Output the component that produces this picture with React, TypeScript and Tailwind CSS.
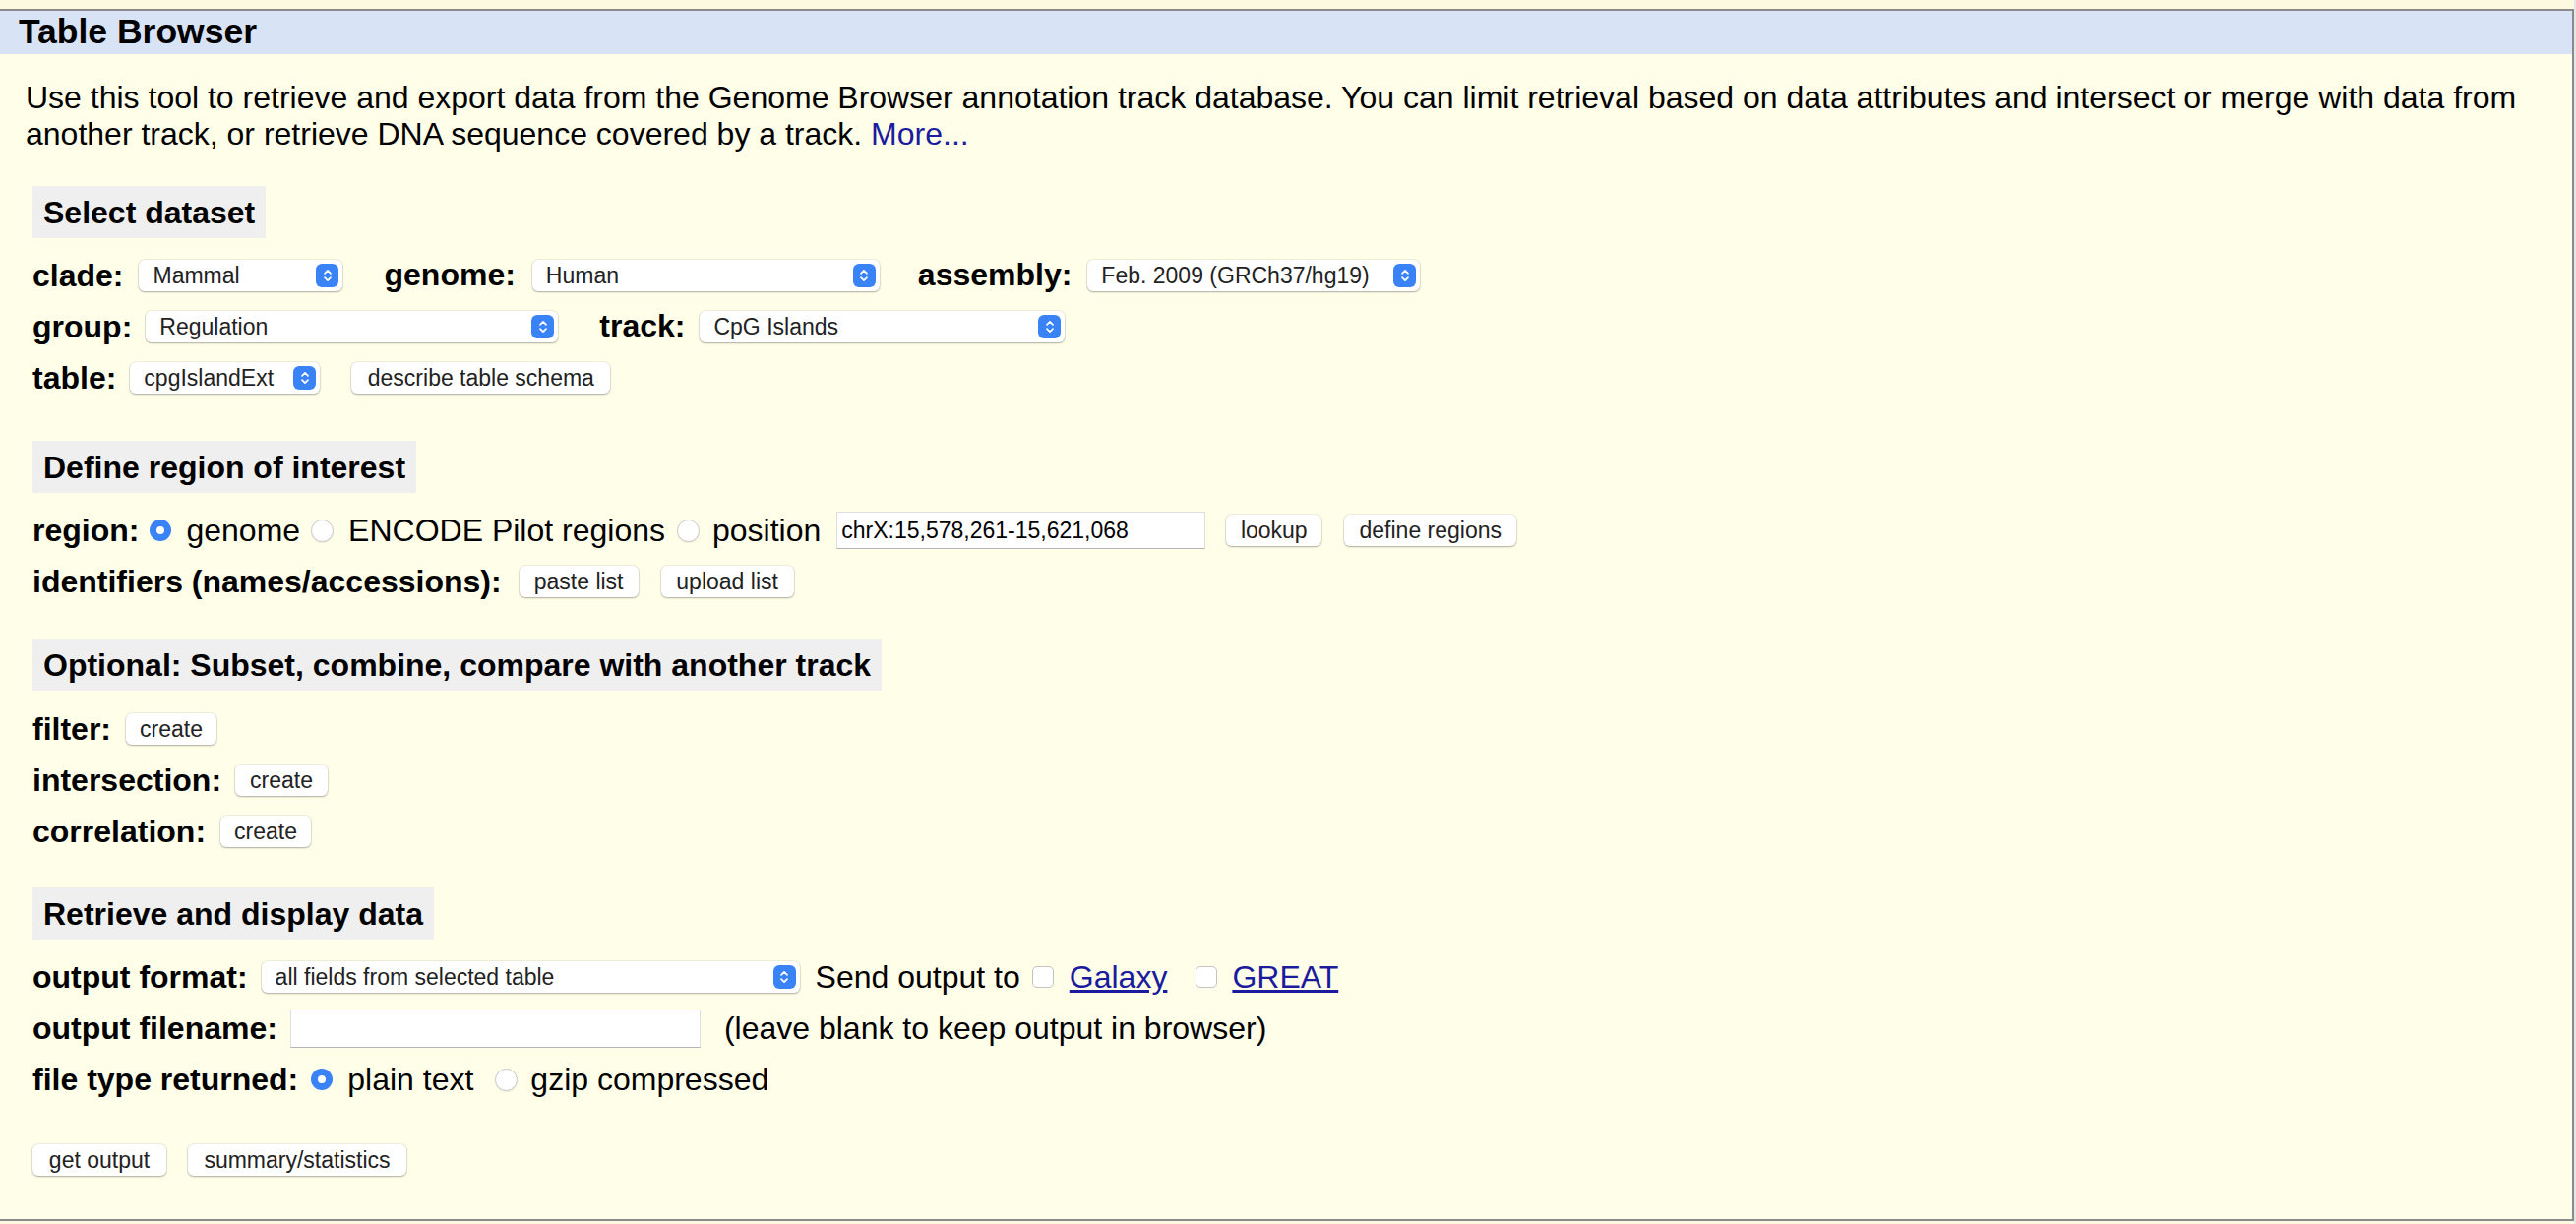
import React from "react";

const ctl =
  "flex h-[32px] shrink-0 items-center rounded-[6px] bg-white text-[23px] text-[#222] shadow-[0_1px_2px_rgba(0,0,0,0.28),0_0_0_1px_rgba(0,0,0,0.06)]";

function Stepper() {
  return (
    <span className="ml-auto mr-[4px] flex h-[24px] w-[23px] items-center justify-center rounded-[6px] bg-[#3a83f7]">
      <svg width="10" height="18" viewBox="0 0 10 18" fill="none" stroke="white" strokeWidth="1.7" strokeLinecap="round" strokeLinejoin="round">
        <path d="M2 6.8 5 3.8l3 3M2 11.2l3 3 3-3" />
      </svg>
    </span>
  );
}

function Select({ value, w, ml }: { value: string; w: string; ml: string }) {
  return (
    <div className={`${ctl} ${w} ${ml} pl-[14px]`}>
      <span className="leading-none">{value}</span>
      <Stepper />
    </div>
  );
}

function Button({ label, w, ml }: { label: string; w: string; ml: string }) {
  return (
    <div className={`${ctl} ${w} ${ml} justify-center`}>
      <span className="leading-none">{label}</span>
    </div>
  );
}

function Radio({ on, ml }: { on?: boolean; ml: string }) {
  if (on)
    return (
      <span className={`${ml} flex h-[22px] w-[22px] shrink-0 items-center justify-center rounded-full bg-[#3a83f7]`}>
        <span className="h-[8px] w-[8px] rounded-full bg-white" />
      </span>
    );
  return (
    <span className={`${ml} h-[23px] w-[23px] shrink-0 rounded-full border border-[#c9c9c9] bg-white shadow-[0_1px_1px_rgba(0,0,0,0.08)]`} />
  );
}

function Check({ ml }: { ml: string }) {
  return <span className={`${ml} h-[22px] w-[22px] shrink-0 rounded-[5px] border border-[#c3c3c3] bg-white`} />;
}

function Header({ children, mt }: { children: React.ReactNode; mt: string }) {
  return (
    <div className={`${mt} flex h-[53px] w-fit items-center bg-[#efefef] px-[11px] text-[32px] font-bold`}>
      {children}
    </div>
  );
}

function Label({ children }: { children: React.ReactNode }) {
  return <span className="shrink-0 text-[32px] font-bold leading-none">{children}</span>;
}

export default function App() {
  return (
    <div className="flex min-h-[1244px] w-full bg-[#fdf8e0] font-['Liberation_Sans',Arial,sans-serif] text-black">
      <div className="flex-1 pt-[9px] pb-[4px]">
        <div className="border-y-2 border-r-2 border-[#8a8a8a] bg-[#fffee9] pb-[44px]">
          <div className="flex h-[44px] items-center bg-[#d9e3f6] pl-[19px] text-[35.5px] font-bold">Table Browser</div>

          <p className="mt-[26px] pl-[26px] pr-[20px] text-[32px] leading-[37px]">
            Use this tool to retrieve and export data from the Genome Browser annotation track database. You can limit
            retrieval based on data attributes and intersect or merge with data from another track, or retrieve DNA
            sequence covered by a track. <a className="text-[#1b1b9e]">More...</a>
          </p>

          <div className="pl-[33px]">
            <Header mt="mt-[34px]">Select dataset</Header>
            <div className="mt-[22px] flex flex-col gap-[20px]">
              <div className="flex h-[32px] items-center">
                <Label>clade:</Label>
                <Select value="Mammal" w="w-[207px]" ml="ml-[16px]" />
                <span className="ml-[42px]"><Label>genome:</Label></span>
                <Select value="Human" w="w-[353px]" ml="ml-[17px]" />
                <span className="ml-[39px]"><Label>assembly:</Label></span>
                <Select value="Feb. 2009 (GRCh37/hg19)" w="w-[338px]" ml="ml-[16px]" />
              </div>
              <div className="flex h-[32px] items-center">
                <Label>group:</Label>
                <Select value="Regulation" w="w-[419px]" ml="ml-[14px]" />
                <span className="ml-[42px]"><Label>track:</Label></span>
                <Select value="CpG Islands" w="w-[371px]" ml="ml-[15px]" />
              </div>
              <div className="flex h-[32px] items-center">
                <Label>table:</Label>
                <Select value="cpgIslandExt" w="w-[193px]" ml="ml-[14px]" />
                <Button label="describe table schema" w="w-[263px]" ml="ml-[32px]" />
              </div>
            </div>

            <Header mt="mt-[48px]">Define region of interest</Header>
            <div className="mt-[22px] flex flex-col gap-[20px]">
              <div className="flex h-[32px] items-center text-[32px]">
                <Label>region:</Label>
                <Radio on ml="ml-[11px]" />
                <span className="ml-[15px] leading-none">genome</span>
                <Radio ml="ml-[11px]" />
                <span className="ml-[15px] leading-none">ENCODE Pilot regions</span>
                <Radio ml="ml-[12px]" />
                <span className="ml-[13px] leading-none">position</span>
                <div className="ml-[16px] flex h-[38px] w-[375px] shrink-0 items-center border border-[#dedede] border-b-[#b5b5b5] bg-white pl-[4px] text-[23px] leading-none">
                  chrX:15,578,261-15,621,068
                </div>
                <Button label="lookup" w="w-[97px]" ml="ml-[21px]" />
                <Button label="define regions" w="w-[175px]" ml="ml-[23px]" />
              </div>
              <div className="flex h-[32px] items-center">
                <Label>identifiers (names/accessions):</Label>
                <Button label="paste list" w="w-[121px]" ml="ml-[18px]" />
                <Button label="upload list" w="w-[135px]" ml="ml-[23px]" />
              </div>
            </div>

            <Header mt="mt-[42px]">Optional: Subset, combine, compare with another track</Header>
            <div className="mt-[23px] flex flex-col gap-[20px]">
              <div className="flex h-[32px] items-center">
                <Label>filter:</Label>
                <Button label="create" w="w-[92px]" ml="ml-[15px]" />
              </div>
              <div className="flex h-[32px] items-center">
                <Label>intersection:</Label>
                <Button label="create" w="w-[94px]" ml="ml-[14px]" />
              </div>
              <div className="flex h-[32px] items-center">
                <Label>correlation:</Label>
                <Button label="create" w="w-[92px]" ml="ml-[15px]" />
              </div>
            </div>

            <Header mt="mt-[41px]">Retrieve and display data</Header>
            <div className="mt-[22px] flex flex-col gap-[20px]">
              <div className="flex h-[32px] items-center text-[32px]">
                <Label>output format:</Label>
                <Select value="all fields from selected table" w="w-[547px]" ml="ml-[14px]" />
                <span className="ml-[16px] leading-none">Send output to</span>
                <Check ml="ml-[12px]" />
                <a className="ml-[16px] leading-none text-[#1b1b9e] underline">Galaxy</a>
                <Check ml="ml-[29px]" />
                <a className="ml-[15px] leading-none text-[#1b1b9e] underline">GREAT</a>
              </div>
              <div className="flex h-[32px] items-center text-[32px]">
                <Label>output filename:</Label>
                <div className="ml-[13px] h-[39px] w-[417px] shrink-0 border border-[#dedede] border-b-[#b5b5b5] bg-white" />
                <span className="ml-[24px] leading-none">(leave blank to keep output in browser)</span>
              </div>
              <div className="flex h-[32px] items-center text-[32px]">
                <Label>file type returned:</Label>
                <Radio on ml="ml-[13px]" />
                <span className="ml-[15px] leading-none">plain text</span>
                <Radio ml="ml-[22px]" />
                <span className="ml-[13px] leading-none">gzip compressed</span>
              </div>
            </div>
            <div className="mt-[50px] flex h-[32px] items-center">
              <Button label="get output" w="w-[136px]" ml="ml-0" />
              <Button label="summary/statistics" w="w-[222px]" ml="ml-[22px]" />
            </div>
          </div>
        </div>
      </div>
      <div className="w-[2px] shrink-0 bg-[#e6e6e6]" />
    </div>
  );
}
